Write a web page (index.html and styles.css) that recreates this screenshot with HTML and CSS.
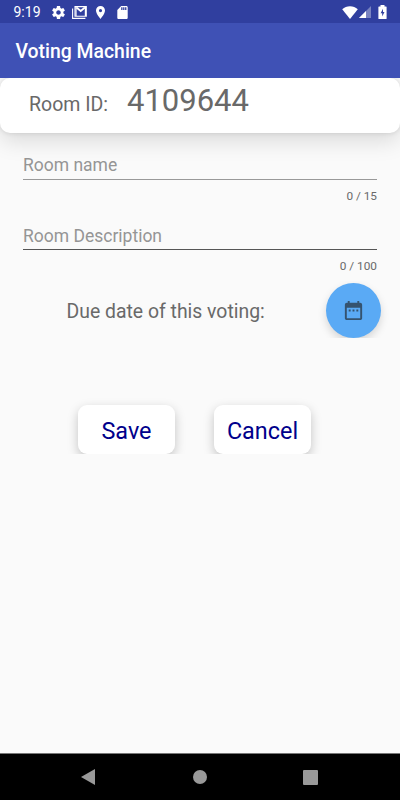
FILE: index.html
```html
<!DOCTYPE html>
<html lang="en">
  <head>
    <meta charset="utf-8" />
    <meta name="viewport" content="width=device-width, initial-scale=1" />
    <link rel="stylesheet" href="styles.css">
    <title>Voting Machine</title>
  </head>
  <body>
    <!-- Status bar -->
    <div class="status-bar">
      <span class="status-bar__time">9:19</span>
      <svg class="icon-settings" viewBox="2 2 20 20" width="13" height="13">
        <path fill="#fff" d="M19.43 12.98c.04-.32.07-.64.07-.98s-.03-.66-.07-.98l2.11-1.65c.19-.15.24-.42.12-.64l-2-3.46c-.12-.22-.39-.3-.61-.22l-2.49 1c-.52-.4-1.08-.73-1.69-.98l-.38-2.65C14.46 2.18 14.25 2 14 2h-4c-.25 0-.46.18-.49.42l-.38 2.65c-.61.25-1.17.59-1.69.98l-2.49-1c-.23-.09-.49 0-.61.22l-2 3.46c-.13.22-.07.49.12.64l2.11 1.65c-.04.32-.07.65-.07.98s.03.66.07.98l-2.11 1.65c-.19.15-.24.42-.12.64l2 3.46c.12.22.39.3.61.22l2.49-1c.52.4 1.08.73 1.69.98l.38 2.65c.03.24.24.42.49.42h4c.25 0 .46-.18.49-.42l.38-2.65c.61-.25 1.17-.59 1.69-.98l2.49 1c.23.09.49 0 .61-.22l2-3.46c.12-.22.07-.49-.12-.64l-2.11-1.65zM12 15.5c-1.93 0-3.5-1.57-3.5-3.5s1.57-3.5 3.5-3.5 3.5 1.57 3.5 3.5-1.57 3.5-3.5 3.5z" />
      </svg>
      <svg class="icon-mail" viewBox="0 0 15 13" width="15" height="13">
        <path d="M.6 2.5v9.9h12.8" fill="none" stroke="#fff" stroke-width="1.1" />
        <path d="M3 .6h11.3v9.6H3z" fill="none" stroke="#fff" stroke-width="1.1" />
        <path d="M4.500 1.500 8.700 5l4.200-3.500" fill="none" stroke="#fff" stroke-width="1.800" />
        <path d="M4 1v9M13.400 1v9" fill="none" stroke="#fff" stroke-width="1.200" />
      </svg>
      <svg class="icon-place" viewBox="5 2 14 20" width="9" height="13">
        <path fill="#fff" d="M12 2C8.13 2 5 5.13 5 9c0 5.25 7 13 7 13s7-7.75 7-13c0-3.87-3.13-7-7-7zm0 9.5a2.5 2.5 0 0 1 0-5 2.5 2.5 0 0 1 0 5z" />
      </svg>
      <svg class="icon-sd" viewBox="4 2 16 20" width="11" height="13">
        <path fill="#fff" d="M18 2h-8L4.020 8 4 20c0 1.100.9 2 2 2h12c1.100 0 2-.9 2-2V4c0-1.100-.9-2-2-2zm-6 6h-2V4h2v4zm3 0h-2V4h2v4zm3 0h-2V4h2v4z" />
      </svg>
      <div class="status-bar__system">
        <svg viewBox="0 0 16 13" width="16" height="13">
          <path fill="#fff" d="M8 13 .2 3.200C2.400 1.200 5 .2 8 .2s5.600 1 7.800 3z" />
        </svg>
        <svg class="icon-signal" viewBox="0 0 12 12" width="12" height="12">
          <path fill="#fff" fill-opacity=".35" d="M12 0v12H0z" />
          <path fill="#fff" d="M7 5v7H0z" />
        </svg>
        <svg class="icon-battery" viewBox="0 0 9 14" width="9" height="14">
          <path fill="#fff" d="M2.500 0h4v1.400H8q.6 0 .6.6V13.400q0 .6-.6.6H1q-.6 0-.6-.6V2q0-.6.6-.6h1.500z" />
          <path fill="#303f9f" d="M5 3.700 2.600 8.300h1.600v3.200l2.300-4.600H5z" />
        </svg>
      </div>
    </div>

    <header class="app-bar">Voting Machine</header>

    <main class="content">
      <section class="room-card">
        <span class="room-card__label">Room ID:</span>
        <span class="room-card__id">4109644</span>
      </section>

      <form class="room-form">
        <div class="field">
          <input class="field__input" type="text" placeholder="Room name" maxlength="15">
          <span class="field__counter">0 / 15</span>
        </div>
        <div class="field field--description">
          <input class="field__input" type="text" placeholder="Room Description" maxlength="100">
          <span class="field__counter">0 / 100</span>
        </div>
      </form>

      <div class="due-date">
        <span class="due-date__label">Due date of this voting:</span>
        <button class="fab" type="button" aria-label="Pick date">
          <svg viewBox="0 0 24 24" width="23" height="23">
            <path fill="#35536f" d="M19 4h-1V2h-2v2H8V2H6v2H5c-1.100 0-2 .9-2 2v14c0 1.100.9 2 2 2h14c1.100 0 2-.9 2-2V6c0-1.100-.9-2-2-2zm0 16H5V9h14v11zM7 11h2v2H7zm4 0h2v2h-2zm4 0h2v2h-2z" />
          </svg>
        </button>
      </div>

      <div class="actions">
        <button class="action" type="button">Save</button>
        <button class="action" type="button">Cancel</button>
      </div>
    </main>

    <!-- System navigation -->
    <nav class="nav-bar">
      <svg viewBox="0 0 14 16" width="14" height="16"><path fill="#999" d="M14 0v16L0 8z" /></svg>
      <svg viewBox="0 0 14 14" width="14" height="14"><circle cx="7" cy="7" r="7" fill="#999" /></svg>
      <svg viewBox="0 0 15 15" width="15" height="15"><rect width="15" height="15" rx="1" fill="#999" /></svg>
    </nav>
  </body>
</html>
```

FILE: styles.css
```css
*, *::before, *::after {
  box-sizing: border-box;
}

html, body {
  margin: 0;
  padding: 0;
  height: 100%;
}

body {
  display: flex;
  flex-direction: column;
  font-family: Roboto, sans-serif;
  color: #696969;
  background: #fafafa;
  overflow: hidden;
}

svg {
  display: block;
  flex: none;
}

button, input {
  font-family: inherit;
}

/* Status bar */
.status-bar {
  display: flex;
  align-items: center;
  flex: none;
  height: 23px;
  padding: 1px 13px 0;
  background: #303f9f;
}

.status-bar__time {
  width: 39px;
  padding-left: 0.5px;
  font-size: 14px;
  line-height: 16px;
  color: #fff;
}

.icon-mail {
  margin-left: 7px;
}

.icon-place {
  margin-left: 9px;
}

.icon-sd {
  margin-left: 12px;
}

.status-bar__system {
  display: flex;
  align-items: center;
  margin-left: auto;
}

.icon-signal {
  margin-left: 1px;
}

.icon-battery {
  margin-left: 7px;
}

/* App bar */
.app-bar {
  flex: none;
  height: 55px;
  padding-left: 15.5px;
  font-size: 19.4px;
  line-height: 58px;
  font-weight: 500;
  color: #fff;
  background: #3f51b5;
}

.content {
  flex: 1;
  overflow: hidden;
}

/* Room card */
.room-card {
  display: flex;
  align-items: baseline;
  height: 55px;
  padding: 5px 0 0 29px;
  background: #fff;
  border-radius: 10px;
  box-shadow: 0 8px 22px rgba(0, 0, 0, 0.13), 0 0 5px rgba(0, 0, 0, 0.12);
}

.room-card__label {
  width: 98px;
  font-size: 19.5px;
}

.room-card__id {
  font-size: 31px;
  line-height: 36px;
}

/* Form fields */
.room-form {
  padding: 17px 23px 0;
}

.field {
  display: flex;
  flex-direction: column;
  height: 70px;
}

.field__input {
  width: 100%;
  height: 30px;
  padding: 0;
  border: 0;
  border-bottom: 1px solid #999;
  outline: 0;
  font-size: 17.5px;
  background: none;
}

.field__input::placeholder {
  color: #959595;
}

.field--description .field__input {
  padding-top: 2px;
  border-bottom-color: #555;
}

.field__counter {
  align-self: flex-end;
  margin-top: 9px;
  font-size: 11.8px;
  line-height: 14px;
}

/* Due date */
.due-date {
  display: flex;
  align-items: flex-start;
  justify-content: space-between;
  height: 57px;
  margin-top: -9px;
  padding: 2px 19px 0 66.5px;
  overflow: hidden;
}

.due-date__label {
  font-size: 19.4px;
  line-height: 58px;
}

.fab {
  display: flex;
  align-items: center;
  justify-content: center;
  width: 55px;
  height: 55px;
  padding: 0;
  border: 0;
  border-radius: 50%;
  background: #5aaaf5;
  box-shadow: 0 4px 8px rgba(0, 0, 0, 0.15);
}

/* Buttons */
.actions {
  display: flex;
  gap: 39px;
  height: 64px;
  margin-top: 52px;
  padding: 15px 0 0 78px;
  overflow: hidden;
}

.action {
  width: 97px;
  height: 49px;
  padding: 3px 0 0;
  border: 0;
  border-radius: 9px;
  font-size: 23.4px;
  color: #00008b;
  background: #fff;
  box-shadow: 0 4px 11px rgba(0, 0, 0, 0.22);
}

/* System navigation */
.nav-bar {
  display: grid;
  grid-template-columns: 112px 110px 15px;
  align-items: center;
  flex: none;
  height: 47px;
  padding-left: 81px;
  border-top: 1px solid #777;
  background: #000;
}
```
